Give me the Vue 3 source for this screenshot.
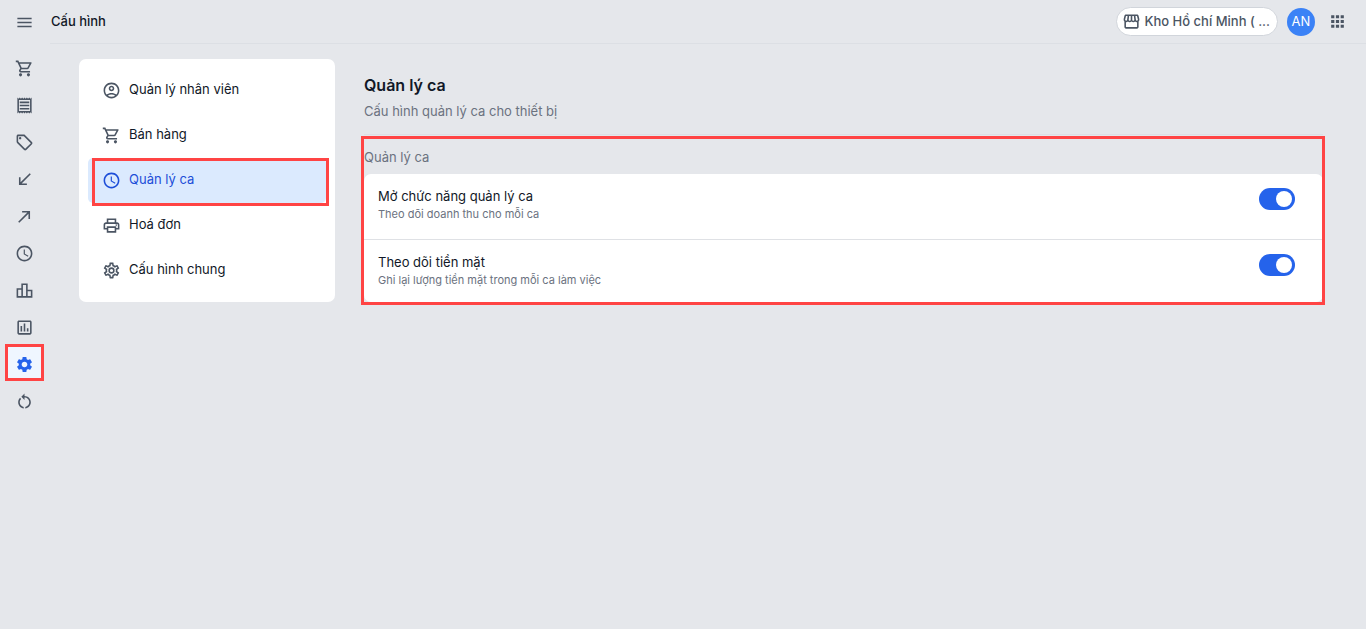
<template>
  <div class="layout">
    <aside class="rail">
      <button type="button" class="menu-toggle" aria-label="Menu">
        <svg class="icon" viewBox="0 0 24 24"><path :d="icons.menu" /></svg>
      </button>
      <nav class="rail-nav">
        <a
          v-for="item in railItems"
          :key="item.icon"
          href="#"
          class="rail-item"
          :class="{ active: item.active }"
          :aria-label="item.label"
          @click.prevent
        >
          <svg class="icon" viewBox="0 0 24 24"><path :d="icons[item.icon]" /></svg>
        </a>
      </nav>
    </aside>

    <div class="page">
      <header class="topbar">
        <h1 class="topbar-title">Cấu hình</h1>
        <button type="button" class="store-select">
          <svg class="icon" viewBox="0 0 24 24"><path :d="icons.store" /></svg>
          <span class="store-name">Kho Hồ chí Minh ( ...</span>
        </button>
        <button type="button" class="avatar">AN</button>
        <button type="button" class="apps" aria-label="Apps">
          <svg class="icon" viewBox="0 0 24 24"><path :d="icons.apps" /></svg>
        </button>
      </header>

      <main class="content">
        <nav class="settings-nav">
          <a
            v-for="item in settingItems"
            :key="item.label"
            href="#"
            class="settings-item"
            :class="{ active: item.label === current }"
            @click.prevent="current = item.label"
          >
            <svg class="icon" viewBox="0 0 24 24"><path :d="icons[item.icon]" /></svg>
            <span class="settings-label">{{ item.label }}</span>
          </a>
        </nav>

        <section class="panel">
          <div class="panel-header">
            <h2 class="panel-title">Quản lý ca</h2>
            <p class="panel-desc">Cấu hình quản lý ca cho thiết bị</p>
          </div>
          <div class="group">
            <h3 class="group-title">Quản lý ca</h3>
            <div class="card">
              <div v-for="option in options" :key="option.id" class="option">
                <label :for="option.id" class="option-text">
                  <span class="option-name">{{ option.name }}</span>
                  <span class="option-desc">{{ option.desc }}</span>
                </label>
                <input :id="option.id" v-model="option.enabled" type="checkbox" class="switch">
              </div>
            </div>
          </div>
        </section>
      </main>
    </div>
  </div>
</template>

<script setup>
import { ref } from 'vue'

// Material icons, 24x24
const icons = {
  menu: 'M3 18h18v-2H3v2zm0-5h18v-2H3v2zm0-7v2h18V6H3z',
  cart: 'M15.55 13c.75 0 1.41-.41 1.75-1.03l3.58-6.49A.996.996 0 0 0 20.01 4H5.21l-.94-2H1v2h2l3.6 7.59-1.35 2.44C4.52 15.37 5.48 17 7 17h12v-2H7l1.1-2h7.45zM6.16 6h12.15l-2.76 5H8.53L6.16 6zM7 18c-1.1 0-1.99.9-1.99 2S5.9 22 7 22s2-.9 2-2-.9-2-2-2zm10 0c-1.1 0-1.99.9-1.99 2s.89 2 1.99 2 2-.9 2-2-.9-2-2-2z',
  receipt: 'M19.5 3.5 18 2l-1.5 1.5L15 2l-1.5 1.5L12 2l-1.5 1.5L9 2 7.5 3.5 6 2 4.5 3.5 3 2v20l1.5-1.5L6 22l1.5-1.5L9 22l1.5-1.5L12 22l1.5-1.5L15 22l1.5-1.5L18 22l1.5-1.5L21 22V2l-1.5 1.5zM19 19.09H5V4.91h14v14.18zM6 15h12v2H6zm0-4h12v2H6zm0-4h12v2H6z',
  tag: 'M21.41 11.41l-8.83-8.83C12.21 2.21 11.7 2 11.17 2H4c-1.1 0-2 .9-2 2v7.17c0 .53.21 1.04.59 1.41l8.83 8.83c.78.78 2.05.78 2.83 0l7.17-7.17c.78-.78.78-2.04-.01-2.83zM12.83 20L4 11.17V4h7.17L20 12.83 12.83 20zM5 6.5a1.5 1.5 0 1 0 3 0a1.5 1.5 0 1 0-3 0z',
  received: 'M20 5.41 18.59 4 7 15.59V9H5v10h10v-2H8.41L20 5.41z',
  made: 'M9 5v2h6.59L4 18.59 5.41 20 17 8.41V15h2V5H9z',
  clock: 'M11.99 2C6.47 2 2 6.48 2 12s4.47 10 9.99 10C17.52 22 22 17.52 22 12S17.52 2 11.99 2zM12 20c-4.42 0-8-3.58-8-8s3.58-8 8-8 8 3.58 8 8-3.58 8-8 8zm.5-13H11v6l5.25 3.15.75-1.23-4.5-2.67z',
  leaderboard: 'M16 11V3H8v6H2v12h20V11h-6zm-6-6h4v14h-4V5zm-6 6h4v8H4v-8zm16 8h-4v-6h4v6z',
  report: 'M19 3H5c-1.1 0-2 .9-2 2v14c0 1.1.9 2 2 2h14c1.1 0 2-.9 2-2V5c0-1.1-.9-2-2-2zm0 16H5V5h14v14zM7 10h2v7H7zm4-3h2v10h-2zm4 6h2v4h-2z',
  settings: 'M19.14 12.94c.04-.3.06-.61.06-.94 0-.32-.02-.64-.07-.94l2.03-1.58c.18-.14.23-.41.12-.61l-1.92-3.32c-.12-.22-.37-.29-.59-.22l-2.39.96c-.5-.38-1.03-.7-1.62-.94l-.36-2.54c-.04-.24-.24-.41-.48-.41h-3.84c-.24 0-.43.17-.47.41l-.36 2.54c-.59.24-1.13.57-1.62.94l-2.39-.96c-.22-.08-.47 0-.59.22L2.74 8.87c-.12.21-.08.47.12.61l2.03 1.58c-.05.3-.09.63-.09.94s.02.64.07.94l-2.03 1.58c-.18.14-.23.41-.12.61l1.92 3.32c.12.22.37.29.59.22l2.39-.96c.5.38 1.03.7 1.62.94l.36 2.54c.05.24.24.41.48.41h3.84c.24 0 .44-.17.47-.41l.36-2.54c.59-.24 1.13-.56 1.62-.94l2.39.96c.22.08.47 0 .59-.22l1.92-3.32c.12-.22.07-.47-.12-.61l-2.01-1.58zM12 15.6c-1.98 0-3.6-1.62-3.6-3.6s1.62-3.6 3.6-3.6 3.6 1.62 3.6 3.6-1.62 3.6-3.6 3.6z',
  restart: 'M12 5V2L8 6l4 4V7c3.31 0 6 2.69 6 6 0 2.97-2.17 5.43-5 5.91v2.02c3.95-.49 7-3.85 7-7.93 0-4.42-3.58-8-8-8zm-6 8c0-1.65.67-3.15 1.76-4.24L6.34 7.34C4.9 8.79 4 10.79 4 13c0 4.08 3.05 7.44 7 7.93v-2.02c-2.83-.48-5-2.94-5-5.91z',
  account: 'M12 2C6.48 2 2 6.48 2 12s4.48 10 10 10 10-4.48 10-10S17.52 2 12 2zM7.35 18.5C8.66 17.56 10.26 17 12 17s3.34.56 4.65 1.5C15.34 19.44 13.74 20 12 20s-3.34-.56-4.65-1.5zm10.79-1.38C16.45 15.8 14.32 15 12 15s-4.45.8-6.14 2.12C4.7 15.73 4 13.95 4 12c0-4.42 3.58-8 8-8s8 3.58 8 8c0 1.95-.7 3.73-1.86 5.12zM12 6c-1.93 0-3.5 1.57-3.5 3.5S10.07 13 12 13s3.5-1.57 3.5-3.5S13.93 6 12 6zm0 5c-.83 0-1.5-.67-1.5-1.5S11.17 8 12 8s1.5.67 1.5 1.5S12.83 11 12 11z',
  printer: 'M19 8h-1V3H6v5H5c-1.66 0-3 1.34-3 3v6h4v4h12v-4h4v-6c0-1.66-1.34-3-3-3zM8 5h8v3H8V5zm8 12v2H8v-4h8v2zm2-2v-2H6v2H4v-4c0-.55.45-1 1-1h14c.55 0 1 .45 1 1v4h-2zM17 11.5a1 1 0 1 0 2 0a1 1 0 1 0-2 0z',
  cog: 'M12 8a4 4 0 0 1 4 4 4 4 0 0 1-4 4 4 4 0 0 1-4-4 4 4 0 0 1 4-4m0 2a2 2 0 0 0-2 2 2 2 0 0 0 2 2 2 2 0 0 0 2-2 2 2 0 0 0-2-2m-2 12c-.25 0-.46-.18-.5-.42l-.37-2.65c-.63-.25-1.17-.59-1.69-.99l-2.49 1.01c-.22.08-.49 0-.61-.22l-2-3.46a.493.493 0 0 1 .12-.64l2.11-1.66L4.5 12l.07-1-2.11-1.63a.493.493 0 0 1-.12-.64l2-3.46c.12-.22.39-.31.61-.22l2.49 1c.52-.39 1.06-.73 1.69-.98l.37-2.65c.04-.24.25-.42.5-.42h4c.25 0 .46.18.5.42l.37 2.65c.63.25 1.17.59 1.69.98l2.49-1c.22-.09.49 0 .61.22l2 3.46c.13.22.07.49-.12.64L19.43 11l.07 1-.07 1 2.11 1.63c.19.15.25.42.12.64l-2 3.46c-.12.22-.39.31-.61.22l-2.49-1c-.52.39-1.06.73-1.69.98l-.37 2.65c-.04.24-.25.42-.5.42h-4m1.25-18-.37 2.61c-1.2.25-2.26.89-3.03 1.78L5.44 7.35l-.75 1.3L6.8 10.2a5.55 5.55 0 0 0 0 3.6l-2.12 1.56.75 1.3 2.43-1.04c.77.88 1.82 1.52 3.01 1.76l.37 2.62h1.52l.37-2.61c1.19-.25 2.24-.89 3.01-1.77l2.43 1.04.75-1.3-2.12-1.55c.4-1.17.4-2.44 0-3.61l2.11-1.55-.75-1.3-2.41 1.04a5.42 5.42 0 0 0-3.03-1.77L12.75 4h-1.5z',
  store: 'M21.9 8.89l-1.05-4.37c-.22-.9-1-1.52-1.91-1.52H5.05c-.9 0-1.69.63-1.9 1.52L2.1 8.89c-.24 1.02-.02 2.06.62 2.88.08.11.19.19.28.29V19c0 1.1.9 2 2 2h14c1.1 0 2-.9 2-2v-6.94c.09-.09.2-.18.28-.28.64-.82.87-1.87.62-2.89zm-2.99-3.9l1.05 4.37c.1.42.01.84-.25 1.17-.14.18-.44.47-.94.47-.61 0-1.14-.49-1.21-1.14L16.98 5l1.93-.01zM13 5h1.96l.54 4.52c.05.39-.07.78-.33 1.07-.22.26-.54.41-.95.41-.67 0-1.22-.59-1.22-1.31V5zM8.49 9.52L9.04 5H11v4.69c0 .72-.55 1.31-1.29 1.31-.34 0-.65-.15-.89-.41-.25-.29-.37-.68-.33-1.07zm-4.45-.16L5.05 5h1.97l-.58 4.86c-.08.65-.6 1.14-1.21 1.14-.49 0-.8-.29-.93-.47-.27-.32-.36-.75-.26-1.17zM5 19v-6.03c.08.01.15.03.23.03.87 0 1.66-.36 2.24-.95.6.6 1.4.95 2.31.95.87 0 1.65-.36 2.23-.93.59.57 1.39.93 2.29.93.84 0 1.64-.35 2.24-.95.58.59 1.37.95 2.24.95.08 0 .15-.02.23-.03V19H5z',
  apps: 'M4 8h4V4H4v4zm6 12h4v-4h-4v4zm-6 0h4v-4H4v4zm0-6h4v-4H4v4zm6 0h4v-4h-4v4zm6-10v4h4V4h-4zm-6 4h4V4h-4v4zm6 6h4v-4h-4v4zm0 6h4v-4h-4v4z'
}

const railItems = [
  { icon: 'cart', label: 'Bán hàng' },
  { icon: 'receipt', label: 'Hoá đơn' },
  { icon: 'tag', label: 'Sản phẩm' },
  { icon: 'received', label: 'Nhập hàng' },
  { icon: 'made', label: 'Xuất hàng' },
  { icon: 'clock', label: 'Quản lý ca' },
  { icon: 'leaderboard', label: 'Thống kê' },
  { icon: 'report', label: 'Báo cáo' },
  { icon: 'settings', label: 'Cấu hình', active: true },
  { icon: 'restart', label: 'Tải lại' }
]

const settingItems = [
  { icon: 'account', label: 'Quản lý nhân viên' },
  { icon: 'cart', label: 'Bán hàng' },
  { icon: 'clock', label: 'Quản lý ca' },
  { icon: 'printer', label: 'Hoá đơn' },
  { icon: 'cog', label: 'Cấu hình chung' }
]

const current = ref('Quản lý ca')

const options = ref([
  { id: 'shift', name: 'Mở chức năng quản lý ca', desc: 'Theo dõi doanh thu cho mỗi ca', enabled: true },
  { id: 'cash', name: 'Theo dõi tiền mặt', desc: 'Ghi lại lượng tiền mặt trong mỗi ca làm việc', enabled: true }
])
</script>

<style>
body {
  background: #e5e7eb;
}
</style>

<style scoped>
.layout {
  display: flex;
  min-height: 100vh;
  font-family: Inter, "Liberation Sans", sans-serif;
  font-size: 13px;
  line-height: 20px;
  color: #111827;
}

.layout * {
  box-sizing: border-box;
}

h1, h2, h3, p {
  margin: 0;
}

button {
  padding: 0;
  border: none;
  background: none;
  font: inherit;
  cursor: pointer;
}

a {
  color: inherit;
  text-decoration: none;
}

.icon {
  flex: none;
  width: 19px;
  height: 19px;
  fill: #4b5563;
}

.rail {
  flex: none;
  width: 50px;
  padding-right: 1px;
}

.menu-toggle {
  display: flex;
  align-items: center;
  justify-content: center;
  width: 100%;
  height: 44px;
}

.rail-nav {
  display: flex;
  flex-direction: column;
  align-items: center;
  gap: 4px;
  padding-top: 6px;
}

.rail-item {
  display: flex;
  align-items: center;
  justify-content: center;
  width: 35px;
  height: 33px;
  padding-top: 4px;
}

.rail-item.active {
  position: relative;
  background: #eff6ff;
}

/* 红框标注 */
.rail-item.active::after,
.settings-item.active::after,
.group::after {
  content: "";
  position: absolute;
  border: 3px solid #ff4444;
  pointer-events: none;
}

.rail-item.active::after {
  inset: -2px;
}

.rail-item.active .icon {
  fill: #2563eb;
}

.page {
  flex: 1;
  min-width: 0;
}

.topbar {
  display: flex;
  align-items: center;
  height: 44px;
  padding: 0 19px 0 1px;
  border-bottom: 1px solid #dcdfe4;
}

.topbar-title {
  flex: 1;
  padding-bottom: 2px;
  font-size: 13px;
  font-weight: 500;
}

.store-select {
  display: flex;
  align-items: center;
  gap: 4px;
  height: 29px;
  padding: 0 7px 0 5px;
  border: 1px solid #d1d5db;
  border-radius: 15px;
  background: #fff;
  color: #4b5563;
  font-weight: 500;
}

.store-name {
  padding-bottom: 1px;
}

.avatar {
  width: 28px;
  height: 28px;
  margin: 0 13px 0 9px;
  padding-bottom: 1px;
  border-radius: 50%;
  background: #3b82f6;
  color: #fff;
}

.apps {
  display: flex;
}

.content {
  display: flex;
  align-items: flex-start;
  gap: 29px;
  padding: 15px 43px 15px 29px;
}

.settings-nav {
  flex: none;
  width: 256px;
  padding: 9px;
  border-radius: 7px;
  background: #fff;
}

.settings-item {
  display: flex;
  align-items: center;
  gap: 8px;
  height: 45px;
  padding: 0 14px;
  border-radius: 5px;
}

.settings-label {
  padding-bottom: 4px;
}

.settings-item.active {
  position: relative;
  background: #dbeafe;
  color: #1d4ed8;
}

.settings-item.active::after {
  inset: 0 -3px -3px 4px;
}

.settings-item.active .icon {
  fill: #1d4ed8;
}

.panel {
  flex: 1;
  min-width: 0;
}

.panel-header {
  padding: 15px 0 13px;
  border-bottom: 1px solid #dcdfe4;
}

.panel-title {
  font-size: 16px;
  font-weight: 600;
  line-height: 22px;
}

.panel-desc {
  padding-top: 5px;
  color: #6b7280;
}

.group {
  position: relative;
  padding-top: 12px;
}

.group::after {
  inset: 1px -2px -3px -3px;
}

.group-title {
  padding-bottom: 7px;
  color: #6b7280;
  font-size: 13px;
  font-weight: 400;
}

.card {
  border-radius: 7px;
  background: #fff;
}

.option {
  display: flex;
  align-items: flex-start;
  justify-content: space-between;
  padding: 14px 28px 15px 14px;
}

.option + .option {
  border-top: 1px solid #dfe1e5;
}

.option:last-child {
  padding-bottom: 12px;
}

.option-name,
.option-desc {
  display: block;
}

.option-name {
  line-height: 16px;
}

.option-desc {
  color: #6b7280;
  font-size: 11px;
  line-height: 20px;
}

.switch {
  appearance: none;
  flex: none;
  display: flex;
  align-items: center;
  width: 36px;
  height: 22px;
  margin: 0;
  padding: 3px;
  border-radius: 11px;
  background: #d1d5db;
  cursor: pointer;
}

.switch::before {
  content: "";
  width: 16px;
  height: 16px;
  border-radius: 50%;
  background: #fff;
}

.switch:checked {
  justify-content: flex-end;
  background: #2563eb;
}
</style>
